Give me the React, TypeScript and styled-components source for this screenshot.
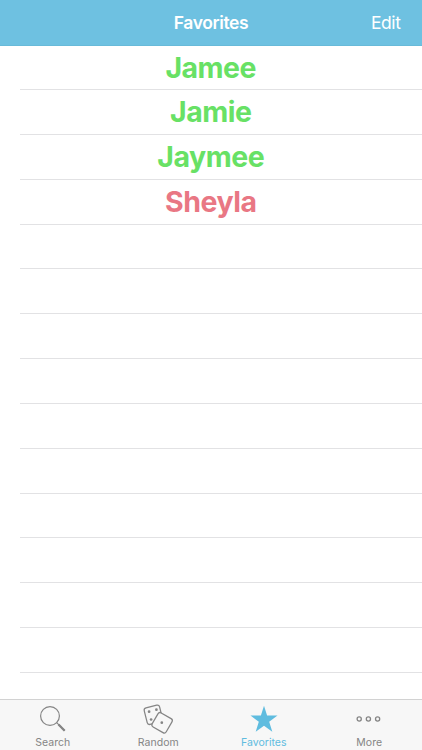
import React from 'react';
import styled, { createGlobalStyle } from 'styled-components';

const GlobalStyle = createGlobalStyle`
  * { box-sizing: border-box; }
  body { margin: 0; background: #fff; font-family: Inter, 'Liberation Sans', sans-serif; }
  button { font: inherit; border: 0; padding: 0; background: none; }
`;

const Screen = styled.div`
  height: 100vh;
  display: flex;
  flex-direction: column;
  overflow: hidden;
`;

const NavBar = styled.header`
  flex: 0 0 46px;
  display: grid;
  grid-template-columns: 1fr auto 1fr;
  align-items: center;
  padding: 0 21.5px;
  background: #6ec1e1;
  border-bottom: 1px solid #68bad9;
  color: #fff;
`;

const Title = styled.h1`
  grid-column: 2;
  margin: 0;
  font-size: 17.5px;
  line-height: 22px;
  font-weight: 600;
  letter-spacing: -0.4px;
`;

const EditButton = styled.button`
  justify-self: end;
  color: #fff;
  font-size: 17.5px;
  line-height: 22px;
  letter-spacing: -0.4px;
`;

const List = styled.ul`
  flex: 1;
  min-height: 0;
  margin: 0;
  padding: 0;
  list-style: none;
  overflow: hidden;
`;

const Row = styled.li<{ $color?: string }>`
  height: 44.83px;
  display: flex;
  align-items: center;
  justify-content: center;
  background: linear-gradient(#e2e2e4, #e2e2e4) 20px 100% / 100% 1px no-repeat;
  color: ${(p) => p.$color ?? 'inherit'};
  font-size: 28.5px;
  line-height: 36px;
  font-weight: 700;
  letter-spacing: -0.5px;

  &:first-child { height: 44.05px; }
`;

const Name = styled.span`
  margin-right: 0.5px;
`;

const TabBar = styled.nav`
  flex: 0 0 51px;
  display: grid;
  grid-template-columns: repeat(4, 1fr);
  background: #f7f7f7;
  border-top: 1px solid #d2d2d2;
`;

const Tab = styled.button<{ $active?: boolean }>`
  display: flex;
  flex-direction: column;
  align-items: center;
  padding-top: 3px;
  color: ${(p) => (p.$active ? '#5fbcdf' : '#858585')};

  svg { display: block; overflow: visible; }
`;

const TabLabel = styled.span`
  margin-top: 1px;
  font-size: 10.5px;
  line-height: 14px;
  letter-spacing: 0.02px;
`;

const SearchIcon = () => (
  <svg width="32" height="32" viewBox="0 0 32 32" fill="none" stroke="currentColor">
    <circle cx="13" cy="13" r="9.4" strokeWidth="1.2" />
    <path d="M19.7 19.7 27.5 27.5" strokeWidth="1.2" />
    <path d="M21.5 21.5 27.7 27.7" strokeWidth="2.3" />
  </svg>
);

const DiceIcon = () => (
  <svg width="32" height="32" viewBox="0 0 32 32" fill="none" stroke="currentColor" strokeWidth="1.25">
    <rect x="3.5" y="3.3" width="15.8" height="17" rx="2.4" transform="rotate(-14 11.4 11.8)" />
    <rect x="12" y="11.7" width="16.2" height="16.2" rx="2.4" transform="rotate(30 20.1 19.8)" fill="#f7f7f7" />
    <g fill="currentColor" stroke="none">
      <circle cx="7.1" cy="8.7" r="1.35" />
      <circle cx="14.4" cy="6.7" r="1.35" />
      <circle cx="9.1" cy="16.5" r="1.35" />
      <circle cx="19.8" cy="19.7" r="1.35" />
    </g>
  </svg>
);

const StarIcon = () => (
  <svg width="32" height="32" viewBox="0 0 32 32" fill="currentColor">
    <path d="M16 2.8 19.1 12.6H29.5L21.2 18.8 24.3 28.8 16 22.7 7.7 28.8 10.8 18.8 2.5 12.6H12.9Z" />
  </svg>
);

const MoreIcon = () => (
  <svg width="32" height="32" viewBox="0 0 32 32" fill="none" stroke="currentColor" strokeWidth="1.3">
    <circle cx="6.2" cy="16" r="2.1" />
    <circle cx="15.4" cy="16" r="2.1" />
    <circle cx="24.6" cy="16" r="2.1" />
  </svg>
);

const favorites = [
  { name: 'Jamee', color: '#68e165' },
  { name: 'Jamie', color: '#68e165' },
  { name: 'Jaymee', color: '#68e165' },
  { name: 'Sheyla', color: '#e97784' },
];

const tabs = [
  { label: 'Search', Icon: SearchIcon },
  { label: 'Random', Icon: DiceIcon },
  { label: 'Favorites', Icon: StarIcon, active: true },
  { label: 'More', Icon: MoreIcon },
];

export default function App() {
  return (
    <>
      <GlobalStyle />
      <Screen>
        <NavBar>
          <Title>Favorites</Title>
          <EditButton>Edit</EditButton>
        </NavBar>
        <List>
          {favorites.map(({ name, color }) => (
            <Row key={name} $color={color}>
              <Name>{name}</Name>
            </Row>
          ))}
          {Array.from({ length: 10 }, (_, i) => (
            <Row key={i} aria-hidden />
          ))}
        </List>
        <TabBar>
          {tabs.map(({ label, Icon, active }) => (
            <Tab key={label} $active={active}>
              <Icon />
              <TabLabel>{label}</TabLabel>
            </Tab>
          ))}
        </TabBar>
      </Screen>
    </>
  );
}
